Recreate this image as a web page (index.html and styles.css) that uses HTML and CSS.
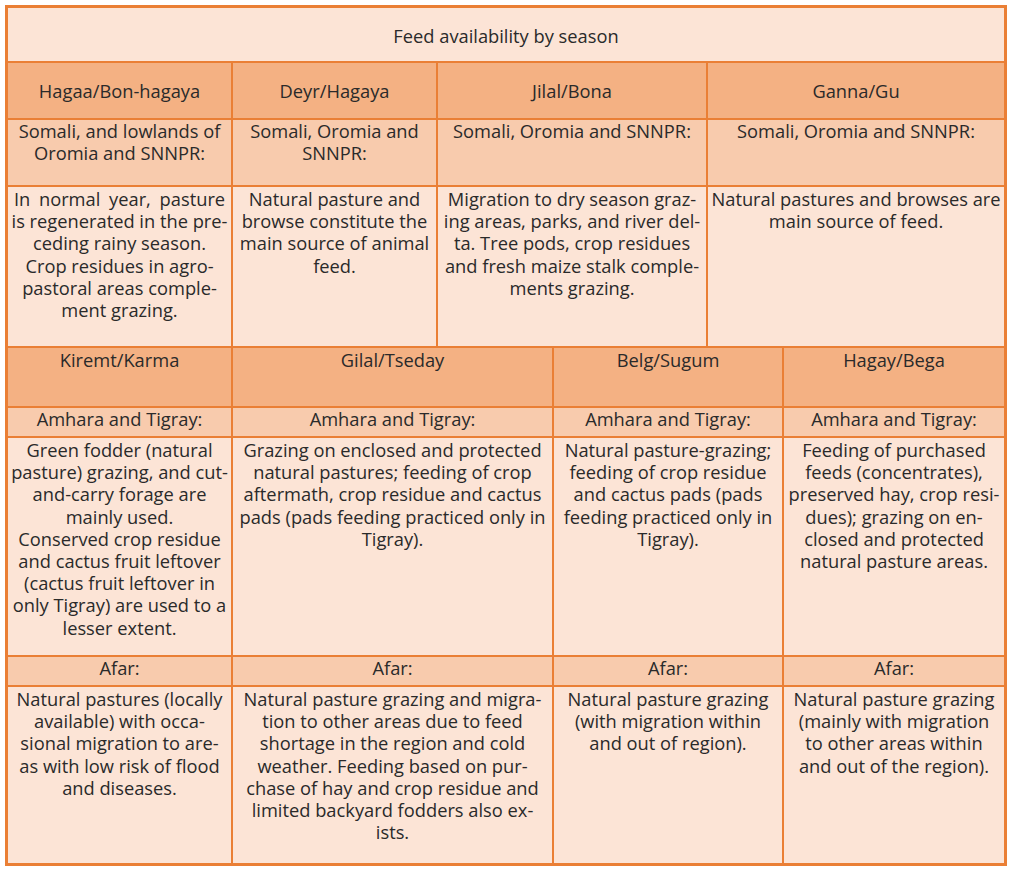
FILE: index.html
```html
<!DOCTYPE html>
<html lang="en">
<head>
<meta charset="utf-8">
<title>Feed availability by season</title>
<link rel="stylesheet" href="styles.css">
</head>
<body>
<div class="sheet">
  <div class="cell title span-all">Feed availability by season</div>

  <div class="cell head mid c1">Hagaa/Bon-hagaya</div>
  <div class="cell head mid c2">Deyr/Hagaya</div>
  <div class="cell head mid c34">Jilal/Bona</div>
  <div class="cell head mid c56">Ganna/Gu</div>

  <div class="cell region c1">Somali, and lowlands of<br>Oromia and SNNPR:</div>
  <div class="cell region c2">Somali, Oromia and<br>SNNPR:</div>
  <div class="cell region c34">Somali, Oromia and SNNPR:</div>
  <div class="cell region c56">Somali, Oromia and SNNPR:</div>

  <div class="cell body c1"><span class="wide">In normal year, pasture</span><br>is regenerated in the pre-<br>ceding rainy season.<br>Crop residues in agro-<br>pastoral areas comple-<br>ment grazing.</div>
  <div class="cell body c2">Natural pasture and<br>browse constitute the<br>main source of animal<br>feed.</div>
  <div class="cell body c34">Migration to dry season graz-<br>ing areas, parks, and river del-<br>ta. Tree pods, crop residues<br>and fresh maize stalk comple-<br>ments grazing.</div>
  <div class="cell body c56">Natural pastures and browses are<br>main source of feed.</div>

  <div class="cell head c1">Kiremt/Karma</div>
  <div class="cell head c23">Gilal/Tseday</div>
  <div class="cell head c45">Belg/Sugum</div>
  <div class="cell head c6">Hagay/Bega</div>

  <div class="cell region c1">Amhara and Tigray:</div>
  <div class="cell region c23">Amhara and Tigray:</div>
  <div class="cell region c45">Amhara and Tigray:</div>
  <div class="cell region c6">Amhara and Tigray:</div>

  <div class="cell body c1">Green fodder (natural<br>pasture) grazing, and cut-<br>and-carry forage are<br>mainly used.<br>Conserved crop residue<br>and cactus fruit leftover<br>(cactus fruit leftover in<br>only Tigray) are used to a<br>lesser extent.</div>
  <div class="cell body c23">Grazing on enclosed and protected<br>natural pastures; feeding of crop<br>aftermath, crop residue and cactus<br>pads (pads feeding practiced only in<br>Tigray).</div>
  <div class="cell body c45">Natural pasture-grazing;<br>feeding of crop residue<br>and cactus pads (pads<br>feeding practiced only in<br>Tigray).</div>
  <div class="cell body c6">Feeding of purchased<br>feeds (concentrates),<br>preserved hay, crop resi-<br>dues); grazing on en-<br>closed and protected<br>natural pasture areas.</div>

  <div class="cell region c1">Afar:</div>
  <div class="cell region c23">Afar:</div>
  <div class="cell region c45">Afar:</div>
  <div class="cell region c6">Afar:</div>

  <div class="cell body c1">Natural pastures (locally<br>available) with occa-<br>sional migration to are-<br>as with low risk of flood<br>and diseases.</div>
  <div class="cell body c23">Natural pasture grazing and migra-<br>tion to other areas due to feed<br>shortage in the region and cold<br>weather. Feeding based on pur-<br>chase of hay and crop residue and<br>limited backyard fodders also ex-<br>ists.</div>
  <div class="cell body c45">Natural pasture grazing<br>(with migration within<br>and out of region).</div>
  <div class="cell body c6">Natural pasture grazing<br>(mainly with migration<br>to other areas within<br>and out of the region).</div>
</div>
</body>
</html>
```

FILE: styles.css
```css
html, body {
  margin: 0;
  padding: 0;
  background: #ffffff;
}

.sheet {
  margin: 5px;
  width: 996px;
  border: 3px solid #ea7f35;
  background: #ea7f35;
  display: grid;
  grid-template-columns: 223px 203px 114px 152px 74px 220px;
  grid-template-rows: 53px 55px 65px 159px 58px 28px 217px 28px 176px;
  gap: 2px;
  font-family: "Open Sans", "Noto Sans", sans-serif;
  font-size: 18.3px;
  line-height: 22.2px;
  color: #2a2a2a;
}

.cell {
  text-align: center;
  white-space: nowrap;
  padding: 1px 1px 0;
}

.wide {
  word-spacing: 4px;
}

.span-all { grid-column: 1 / 7; }
.c1 { grid-column: 1 / 2; }
.c2 { grid-column: 2 / 3; }
.c34 { grid-column: 3 / 5; }
.c56 { grid-column: 5 / 7; }
.c23 { grid-column: 2 / 4; }
.c45 { grid-column: 4 / 6; }
.c6 { grid-column: 6 / 7; }

.title {
  background: #fce4d6;
  display: flex;
  align-items: center;
  justify-content: center;
  padding-top: 4px;
}

.head {
  background: #f4b183;
}

.head.mid {
  display: flex;
  align-items: center;
  justify-content: center;
  padding-top: 1px;
}

.region {
  background: #f8cbad;
  padding-top: 0;
}

.body {
  background: #fce4d6;
  padding-top: 1px;
}
```
